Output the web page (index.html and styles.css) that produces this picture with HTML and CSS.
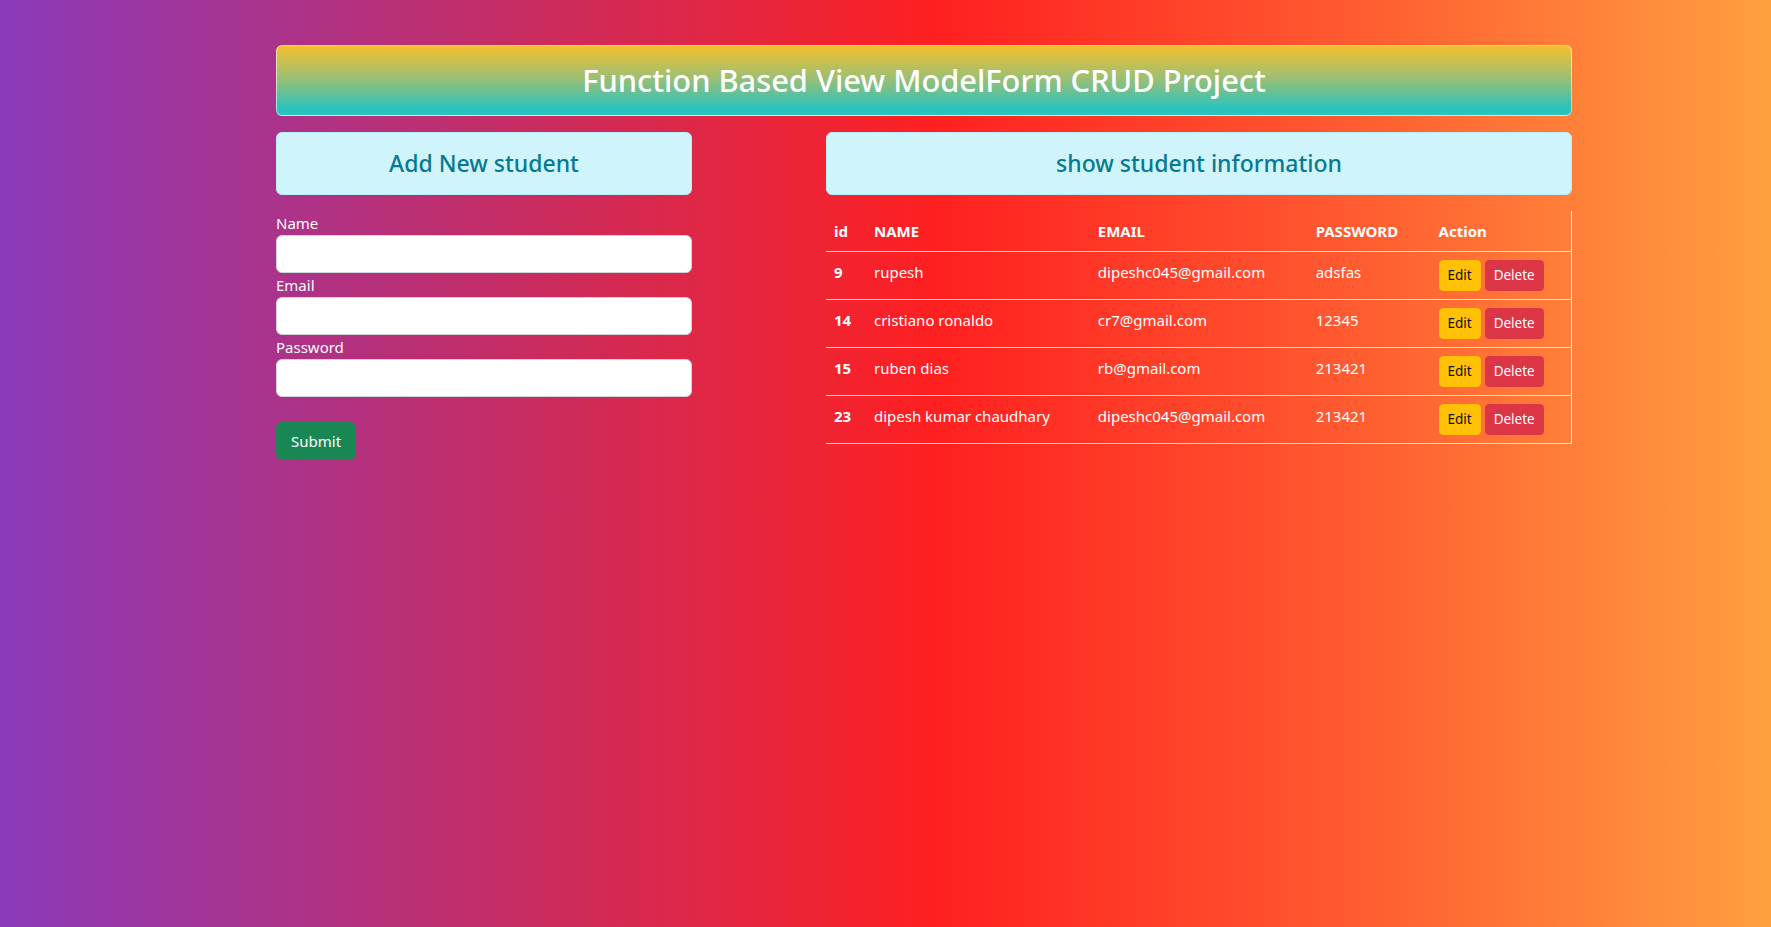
FILE: index.html
```html
<!DOCTYPE html>
<html lang="en">
<head>
<meta charset="utf-8">
<title>Function Based View ModelForm CRUD Project</title>
<link rel="stylesheet" href="styles.css">
</head>
<body>
<div class="container">
  <div class="banner">
    <h2 class="banner-title">Function Based View ModelForm CRUD Project</h2>
  </div>
  <div class="row">
    <div class="col-left">
      <div class="info-box"><h4 class="info-title">Add New student</h4></div>
      <form class="student-form">
        <label class="field-label" for="name">Name</label>
        <input class="field-input" id="name" type="text">
        <label class="field-label" for="email">Email</label>
        <input class="field-input" id="email" type="email">
        <label class="field-label" for="password">Password</label>
        <input class="field-input" id="password" type="password">
        <div class="form-actions">
          <button class="btn btn-success" type="button">Submit</button>
        </div>
      </form>
    </div>
    <div class="col-right">
      <div class="info-box"><h4 class="info-title">show student information</h4></div>
      <table class="student-table">
        <thead>
          <tr>
            <th class="c-id">id</th>
            <th class="c-name">NAME</th>
            <th class="c-email">EMAIL</th>
            <th class="c-pass">PASSWORD</th>
            <th class="c-action">Action</th>
          </tr>
        </thead>
        <tbody>
          <tr>
            <th>9</th><td>rupesh</td><td>dipeshc045@gmail.com</td><td>adsfas</td>
            <td><button class="btn-sm btn-warning" type="button">Edit</button> <button class="btn-sm btn-danger" type="button">Delete</button></td>
          </tr>
          <tr>
            <th>14</th><td>cristiano ronaldo</td><td>cr7@gmail.com</td><td>12345</td>
            <td><button class="btn-sm btn-warning" type="button">Edit</button> <button class="btn-sm btn-danger" type="button">Delete</button></td>
          </tr>
          <tr>
            <th>15</th><td>ruben dias</td><td>rb@gmail.com</td><td>213421</td>
            <td><button class="btn-sm btn-warning" type="button">Edit</button> <button class="btn-sm btn-danger" type="button">Delete</button></td>
          </tr>
          <tr>
            <th>23</th><td>dipesh kumar chaudhary</td><td>dipeshc045@gmail.com</td><td>213421</td>
            <td><button class="btn-sm btn-warning" type="button">Edit</button> <button class="btn-sm btn-danger" type="button">Delete</button></td>
          </tr>
        </tbody>
      </table>
    </div>
  </div>
</div>
</body>
</html>
```
FILE: styles.css
```css
* { box-sizing: border-box; }
html, body { height: 100%; }
body {
  margin: 0;
  font-family: "Noto Sans", "Open Sans", "Liberation Sans", sans-serif;
  font-size: 16px;
  line-height: 1.5;
  color: #fff;
  background: linear-gradient(to right, #8a3ab9 0%, #c42d66 28%, #ff2020 53%, #ff5a30 76%, #ffa040 100%);
  min-height: 927px;
}
.container {
  width: 1296px;
  margin-left: 276px;
  padding-top: 45px;
}
.banner {
  background: linear-gradient(to bottom, #f3c02e 0%, #9fbf72 45%, #2bc3bd 90%, #2bc3bd 100%);
  border: 1px solid rgba(255,255,255,0.55);
  border-radius: 6px;
  padding: 15px 16px;
  text-align: center;
  margin-bottom: 16px;
}
.banner-title {
  margin: 0;
  font-size: 30.8px;
  font-weight: 500;
  line-height: 39px;
  color: #fff;
}
.row {
  display: flex;
  align-items: flex-start;
}
.col-left { width: 416px; }
.col-right { width: 746px; margin-left: 134px; }
.info-box {
  background: #cff4fc;
  border: 1px solid #b6effb;
  border-radius: 6px;
  padding: 16px;
  text-align: center;
  margin-bottom: 16px;
}
.info-title {
  margin: 0;
  font-size: 23px;
  font-weight: 500;
  line-height: 29px;
  color: #087990;
}
.student-form { display: flex; flex-direction: column; }
.field-label { display: block; line-height: 24px; font-size: 15px; }
.field-input {
  display: block;
  width: 100%;
  height: 38px;
  border: 1px solid #ced4da;
  border-radius: 6px;
  background: #fff;
  padding: 6px 12px;
  font: inherit;
}
.form-actions { padding-top: 25px; }
.btn {
  display: inline-block;
  font: inherit;
  font-size: 15px;
  line-height: 24px;
  padding: 6px 14px;
  border-radius: 6px;
  border: 1px solid transparent;
  cursor: pointer;
}
.btn-success { background: #198754; border-color: #198754; color: #fff; }
.student-table {
  width: 746px;
  border-collapse: collapse;
  border-right: 1px solid rgba(255,255,255,0.85);
  vertical-align: top;
  font-size: 15px;
}
.student-table th, .student-table td {
  text-align: left;
  padding: 8px;
  vertical-align: top;
  line-height: 24px;
  border-bottom: 1px solid rgba(255,255,255,0.8);
  white-space: nowrap;
}
.student-table th { font-weight: 700; }
.c-id { width: 40px; }
.c-name { width: 224px; }
.c-email { width: 218px; }
.c-pass { width: 123px; }
.c-action { width: 141px; }
.btn-sm {
  display: inline-block;
  font: inherit;
  font-size: 13.5px;
  line-height: 21px;
  padding: 4px 8px;
  border-radius: 4px;
  border: 1px solid transparent;
  cursor: pointer;
}
.btn-warning { background: #ffc107; border-color: #ffc107; color: #111; }
.btn-danger { background: #dc3545; border-color: #dc3545; color: #fff; }
```
